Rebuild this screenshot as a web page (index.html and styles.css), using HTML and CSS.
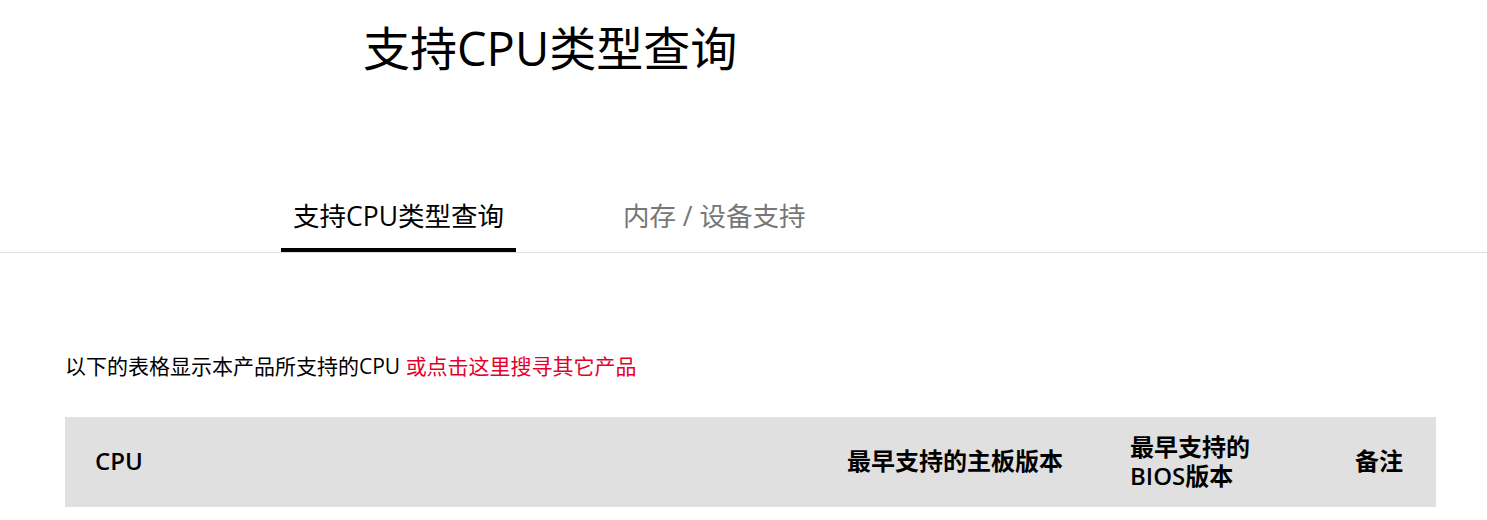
FILE: index.html
```html
<!DOCTYPE html>
<html lang="zh-CN">
<head>
    <meta charset="UTF-8">
    <meta name="viewport" content="width=device-width, initial-scale=1.0">
    <title>支持CPU类型查询</title>
    <link rel="stylesheet" href="styles.css">
</head>
<body>
    <div class="page-title">
        <h1>支持CPU类型查询</h1>
    </div>

    <!-- Tabs -->
    <div class="tabs">
        <a class="tab active" href="#">支持CPU类型查询</a>
        <a class="tab" href="#">内存 / 设备支持</a>
    </div>

    <div class="content">
        <p class="intro">以下的表格显示本产品所支持的CPU <a href="#">或点击这里搜寻其它产品</a></p>

        <table class="cpu-table">
            <thead>
                <tr>
                    <th class="col-cpu">CPU</th>
                    <th class="col-board">最早支持的主板版本</th>
                    <th class="col-bios">最早支持的<br>BIOS版本</th>
                    <th class="col-note">备注</th>
                </tr>
            </thead>
        </table>
    </div>
</body>
</html>
```

FILE: styles.css
```css
body {
    margin: 0;
    font-family: "Open Sans", "Noto Sans CJK SC", sans-serif;
    color: #000;
    background: #fff;
}

/* Page title */
.page-title {
    padding: 18px 0 0 363px;
}

.page-title h1 {
    margin: 0;
    font-size: 47px;
    font-weight: 400;
    line-height: 60px;
}

/* Tabs */
.tabs {
    display: flex;
    gap: 95px;
    margin-top: 106px;
    padding-left: 281px;
    border-bottom: 1px solid #ddd;
}

.tab {
    padding: 14px 12px;
    font-size: 26.5px;
    line-height: 36px;
    color: #777;
    text-decoration: none;
    border-bottom: 4px solid transparent;
}

.tab.active {
    color: #000;
    border-bottom-color: #000;
}

/* Content */
.content {
    padding: 0 51px 0 65px;
}

.intro {
    margin: 97px 0 35px;
    font-size: 21px;
    line-height: 32px;
}

.intro a {
    color: #e4002b;
    text-decoration: none;
}

.cpu-table {
    width: 100%;
    border-collapse: collapse;
    table-layout: fixed;
}

.cpu-table th {
    height: 87px;
    padding: 0 30px 3px;
    background-color: #e0e0e0;
    font-size: 24px;
    font-weight: 600;
    line-height: 29px;
    text-align: left;
    vertical-align: middle;
}

.col-cpu { width: 692px; }
.col-board { width: 223px; }
.col-bios { width: 165px; }
```
